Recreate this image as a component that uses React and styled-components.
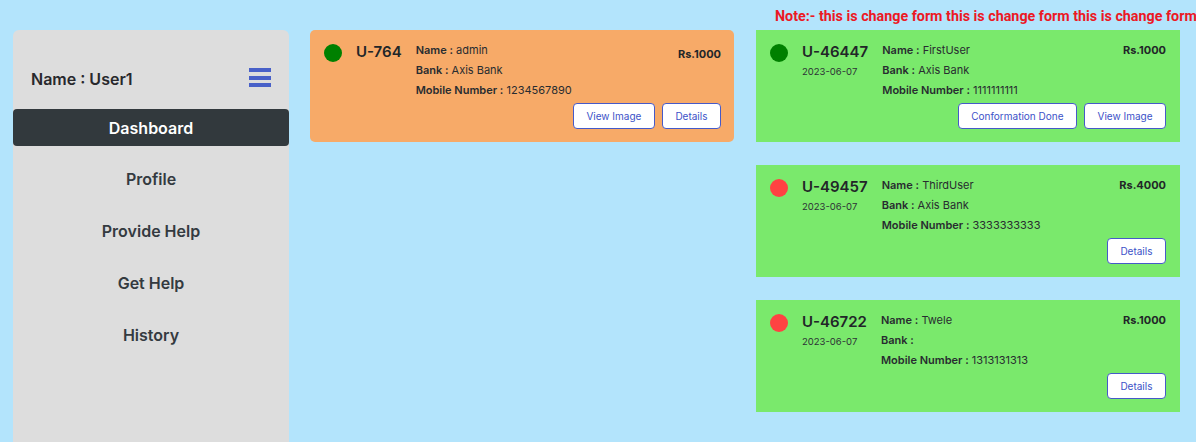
import styled, { createGlobalStyle } from 'styled-components';

const GlobalStyle = createGlobalStyle`
 html, body {
  margin: 0;
  padding: 0;
  background-color: rgb(179, 228, 252);
  overflow: hidden;
 }
 * {
  box-sizing: border-box;
 }
`;

const Page = styled.div`
 width: 1196px;
 height: 442px;
 font-family: Inter, 'Noto Sans', sans-serif;
 color: rgb(45, 50, 54);
`;

const NoteBar = styled.div`
 height: 30px;
 padding-left: 775px;
 padding-top: 5px;
 overflow: hidden;
 white-space: nowrap;
`;

const Note = styled.span`
 font-family: Roboto, 'Liberation Sans', sans-serif;
 font-weight: 700;
 font-size: 14.3px;
 color: rgb(236, 24, 36);
`;

const Main = styled.div`
 display: flex;
 align-items: flex-start;
 padding-left: 13px;
 gap: 22px;
`;

const Sidebar = styled.aside`
 width: 276px;
 height: 420px;
 background-color: rgb(221, 221, 221);
 border-radius: 6px 6px 0 0;
 padding-top: 30px;
 margin-right: -1px;
 flex-shrink: 0;
`;

const SideHead = styled.div`
 height: 38px;
 display: flex;
 align-items: center;
 justify-content: space-between;
 padding: 0 18px;
 margin-bottom: 11px;
`;

const UserName = styled.h3`
 margin: 0;
 font-size: 16px;
 font-weight: 600;
 color: rgb(40, 40, 44);
`;

const Burger = styled.svg`
 width: 22px;
 height: 20px;
 margin-top: -2px;
`;

const Active = styled.div`
 height: 37px;
 display: flex;
 align-items: center;
 justify-content: center;
 background-color: rgb(50, 57, 61);
 color: #fff;
 border-radius: 4px;
 font-size: 16px;
 font-weight: 600;
 margin-bottom: 7px;
`;

const NavItem = styled.div`
 height: 52px;
 display: flex;
 align-items: center;
 justify-content: center;
 font-size: 16px;
 font-weight: 600;
 color: rgb(52, 58, 64);
`;

const Column = styled.div`
 width: 424px;
 flex-shrink: 0;
 display: flex;
 flex-direction: column;
 gap: 23px;
`;

const Card = styled.div`
 background-color: ${p => (p.$orange ? 'rgb(247, 170, 104)' : 'rgb(122, 233, 108)')};
 border-radius: ${p => (p.$orange ? '5px' : '0')};
 height: 112px;
 padding: 10px ${p => (p.$orange ? '13px' : '14px')} 13px 14px;
 display: flex;
 flex-direction: column;
`;

const Top = styled.div`
 display: flex;
 align-items: flex-start;
`;

const Dot = styled.span`
 width: 18px;
 height: 18px;
 border-radius: 50%;
 flex-shrink: 0;
 margin-top: 4px;
 margin-right: 14px;
 background-color: ${p => (p.$ok ? 'rgb(0, 128, 0)' : 'rgb(255, 66, 66)')};
`;

const IdBlock = styled.div`
 margin-right: 14px;
 padding-top: 2px;
`;

const UserId = styled.div`
 font-size: 15px;
 font-weight: 600;
 line-height: 20px;
 color: rgb(34, 38, 40);
`;

const DateText = styled.div`
 font-size: 9.5px;
 line-height: 16px;
 margin-top: 2px;
 color: rgb(45, 50, 54);
`;

const Info = styled.div`
 flex: 1;
`;

const Line = styled.div`
 font-size: 11px;
 line-height: 20px;
 color: rgb(40, 44, 48);

 b {
  font-weight: 600;
 }
`;

const Price = styled.div`
 font-size: 11px;
 font-weight: 700;
 line-height: 20px;
 margin-top: ${p => (p.$low ? '4px' : '0')};
 color: rgb(34, 38, 40);
`;

const Actions = styled.div`
 display: flex;
 justify-content: flex-end;
 gap: 7px;
 margin-top: 3px;
`;

const Button = styled.button`
 height: 26px;
 padding: 0 12.5px;
 background-color: #fff;
 border: 1px solid rgb(70, 90, 200);
 border-radius: 4px;
 color: rgb(60, 82, 200);
 font-family: Inter, 'Noto Sans', sans-serif;
 font-size: 10px;
`;

const requests = [
 { id: 'U-46447', date: '2023-06-07', name: 'FirstUser', bank: 'Axis Bank', mobile: '1111111111', price: 'Rs.1000', ok: true, buttons: ['Conformation Done', 'View Image'] },
 { id: 'U-49457', date: '2023-06-07', name: 'ThirdUser', bank: 'Axis Bank', mobile: '3333333333', price: 'Rs.4000', ok: false, buttons: ['Details'] },
 { id: 'U-46722', date: '2023-06-07', name: 'Twele', bank: '', mobile: '1313131313', price: 'Rs.1000', ok: false, buttons: ['Details'] },
];

const HelpCard = ({ item, orange }) => (
 <Card $orange={orange}>
  <Top>
   <Dot $ok={item.ok} />
   <IdBlock>
    <UserId>{item.id}</UserId>
    {item.date && <DateText>{item.date}</DateText>}
   </IdBlock>
   <Info>
    <Line><b>Name :</b> {item.name}</Line>
    <Line><b>Bank :</b> {item.bank}</Line>
    <Line><b>Mobile Number :</b> {item.mobile}</Line>
   </Info>
   <Price $low={orange}>{item.price}</Price>
  </Top>
  <Actions>
   {item.buttons.map(b => (
    <Button key={b}>{b}</Button>
   ))}
  </Actions>
 </Card>
);

const App = () => {
 return (
  <Page>
   <GlobalStyle />
   <NoteBar>
    <Note>Note:- this is change form this is change form this is change form</Note>
   </NoteBar>
   <Main>
    <Sidebar>
     <SideHead>
      <UserName>Name : User1</UserName>
      <Burger viewBox='0 0 22 20'>
       <rect x='0' y='0' width='22' height='4' fill='rgb(72, 96, 200)' />
       <rect x='0' y='8' width='22' height='4' fill='rgb(72, 96, 200)' />
       <rect x='0' y='15' width='22' height='4' fill='rgb(72, 96, 200)' />
      </Burger>
     </SideHead>
     <Active>Dashboard</Active>
     <NavItem>Profile</NavItem>
     <NavItem>Provide Help</NavItem>
     <NavItem>Get Help</NavItem>
     <NavItem>History</NavItem>
    </Sidebar>
    <Column>
     <HelpCard
      orange
      item={{ id: 'U-764', name: 'admin', bank: 'Axis Bank', mobile: '1234567890', price: 'Rs.1000', ok: true, buttons: ['View Image', 'Details'] }}
     />
    </Column>
    <Column>
     {requests.map(r => (
      <HelpCard key={r.id} item={r} />
     ))}
    </Column>
   </Main>
  </Page>
 );
};

export default App;
